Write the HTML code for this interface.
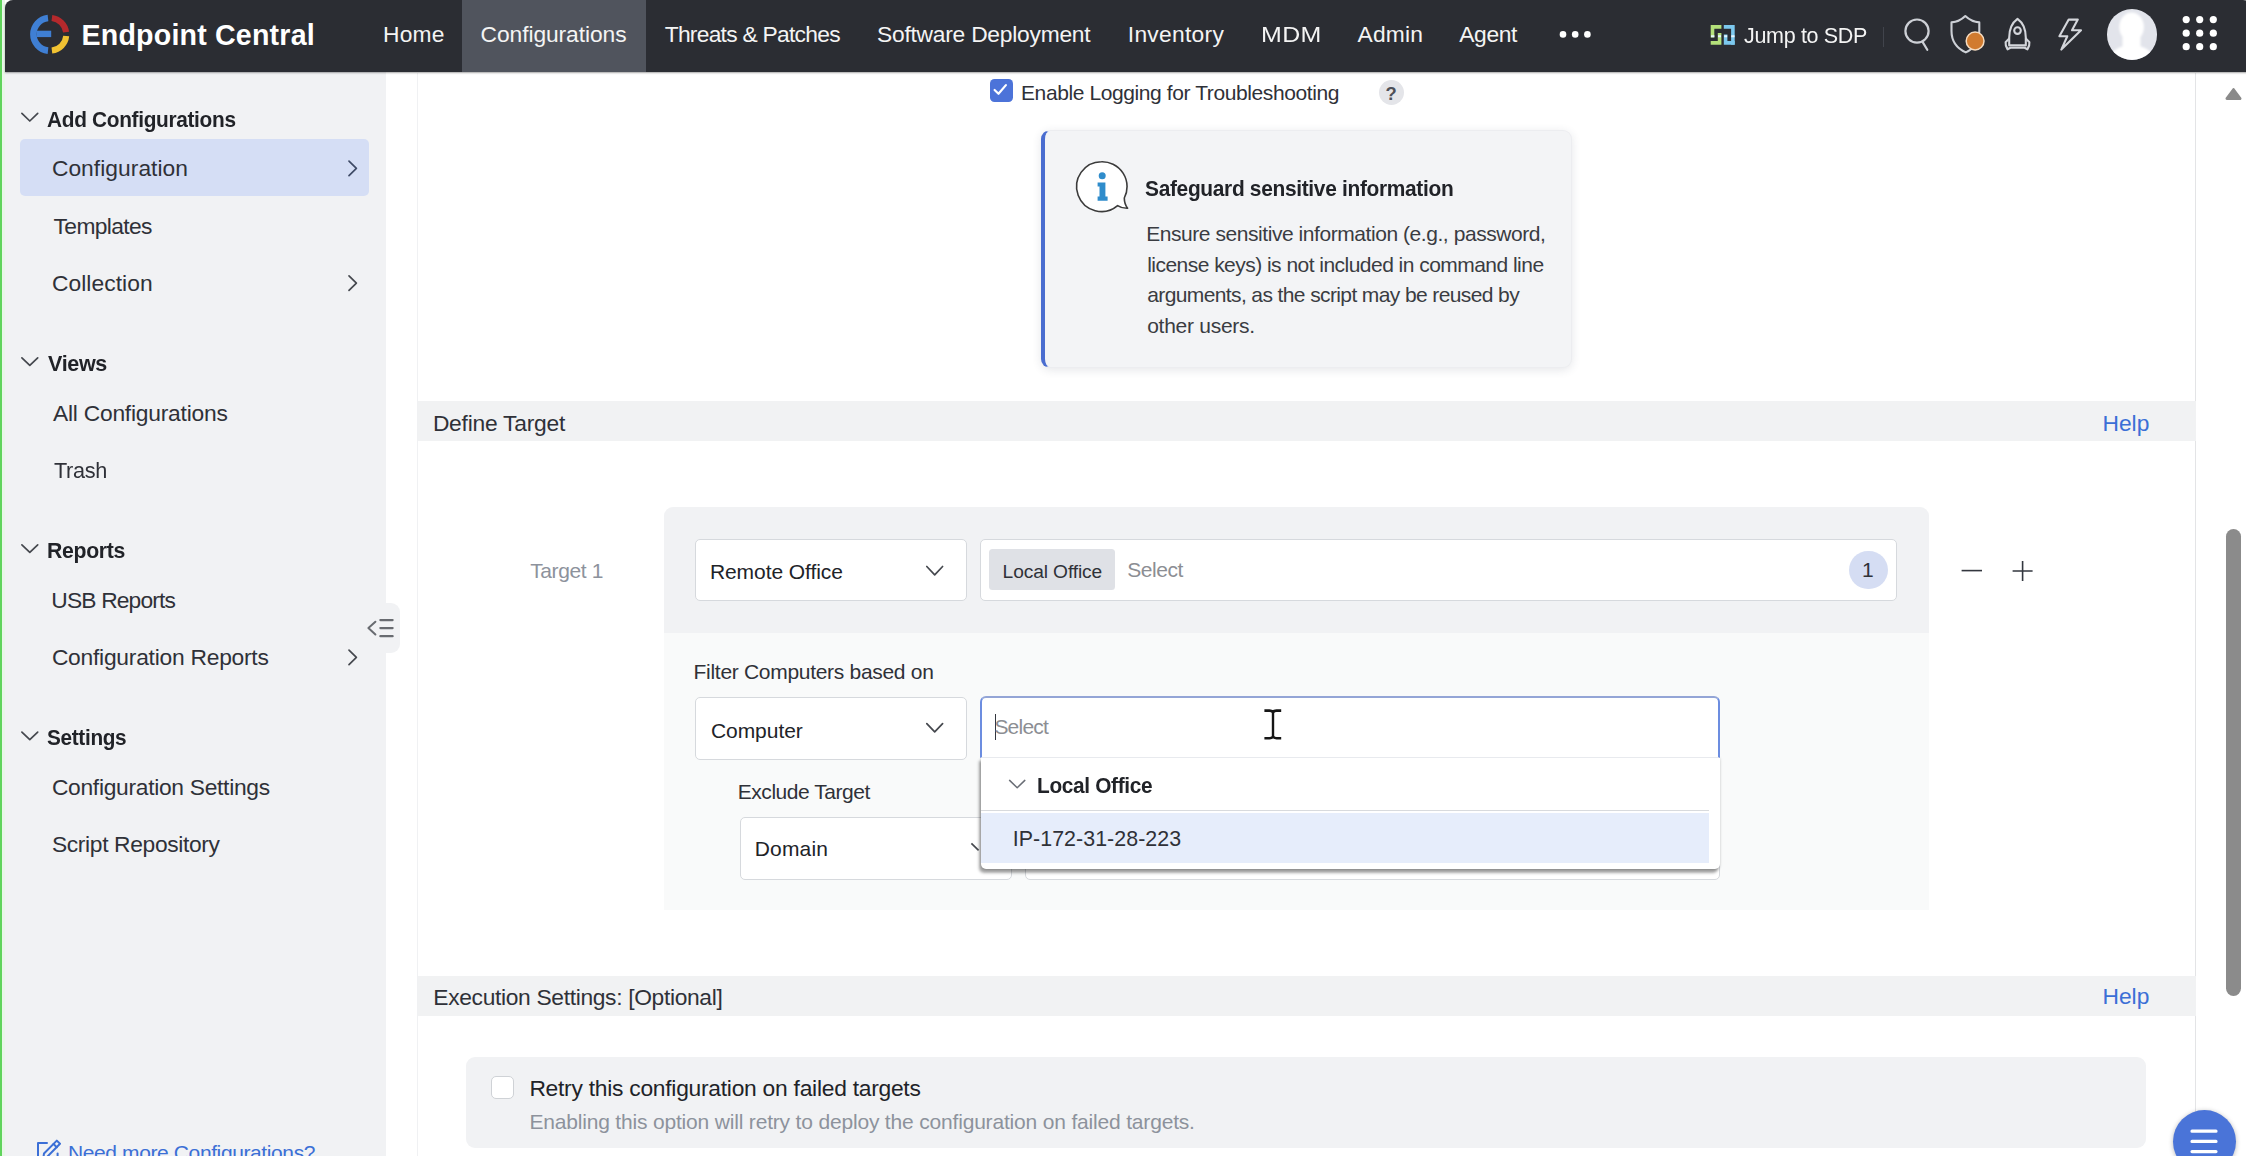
<!DOCTYPE html>
<html lang="en">
<head>
<meta charset="utf-8">
<title>Endpoint Central - Configurations</title>
<style>
*{box-sizing:border-box;margin:0;padding:0}
html,body{width:2246px;height:1156px;overflow:hidden;background:#fff}
body{position:relative;font-family:"Liberation Sans",sans-serif;color:#2a2e36}
.abs,.t,svg.i{position:absolute}
.t{white-space:pre;line-height:40px;display:block;transform-origin:0 50%}
a.t{text-decoration:none}
#edge{left:0;top:0;width:2.4px;height:1156px;background:#60d45c}
#edge2{left:2.4px;top:0;width:2.6px;height:1156px;background:#e9f7e8}
#nav{left:5px;top:0;width:2247px;height:72px;background:#2b2d33;border-radius:8px 9px 0 0;box-shadow:0 1px 2px rgba(0,0,0,.35)}
#tab{left:462.3px;top:0;width:183.7px;height:72px;background:#50545d}
#side{left:4.5px;top:72px;width:381.2px;height:1084px;background:#f1f2f4}
#selitem{left:20.3px;top:139px;width:348.5px;height:57px;background:#d5def5;border-radius:5px}
#collapse{left:366px;top:602.8px;width:34.4px;height:49.8px;background:#f1f2f4;border-radius:0 9px 9px 0}
#lb{left:417px;top:73px;width:1px;height:1083px;background:#f0f1f3}
#rb{left:2195.2px;top:73px;width:1px;height:1083px;background:#e3e4e6}
.band{left:418px;width:1777.5px;background:#f1f2f3}
#band1{top:401.2px;height:40px}
#band2{top:975.6px;height:40px}
#info{left:1041.2px;top:129.8px;width:531px;height:238.2px;background:#f3f4f6;border-radius:9px;border:1px solid #ecedf0;border-left:4px solid #4a6dd0;box-shadow:0 2px 10px rgba(40,50,70,.12)}
#tbox{left:663.5px;top:507px;width:1265.7px;height:403.2px;background:#f9fafa;border-radius:9px 9px 0 0;overflow:hidden}
#tboxtop{left:0;top:0;width:100%;height:126.2px;background:#f1f2f4}
.inp{background:#fff;border:1px solid #d6d9dd;border-radius:5px}
#chip{left:988.8px;top:549.1px;width:126.6px;height:41.2px;background:#dfe1e6;border-radius:3.5px}
#badge{left:1849.3px;top:550.7px;width:38.4px;height:38.4px;border-radius:50%;background:#d5ddf3}
#ddin{left:980.2px;top:696px;width:739.6px;height:61.6px;background:#fff;border:2px solid #6c8de0;border-top-color:#94a5d6;border-bottom:1px solid #e8eaee;border-radius:6px 6px 0 0}
#dd{left:981.2px;top:757px;width:738.4px;height:112.2px;background:#fff;border-radius:0 0 5px 5px;box-shadow:-2px 4px 3px rgba(0,0,0,.34),0 1px 3px rgba(0,0,0,.2)}
#ddline{left:981.2px;top:810px;width:727.5px;height:1.2px;background:#d8dadd}
#ddopt{left:981.2px;top:812.8px;width:727.5px;height:50px;background:#e6edfb}
#retry{left:466.1px;top:1057.4px;width:1680.2px;height:91px;background:#f1f2f4;border-radius:9px}
#cb1{left:989.7px;top:78.8px;width:23.6px;height:23.4px;background:#4c73d9;border-radius:4.5px}
#cb2{left:490.6px;top:1076.2px;width:23px;height:23.3px;background:#fff;border:1px solid #cfd2d6;border-radius:5px}
#qm{left:1378.8px;top:80.2px;width:25.2px;height:25.2px;border-radius:50%;background:#e4e5e9}
#thumb{left:2226px;top:528.6px;width:14.5px;height:467.6px;border-radius:7.5px;background:#8b8b8b}
#fab{left:2173.1px;top:1110.1px;width:63px;height:63px;border-radius:50%;background:#4a74d8;box-shadow:0 1px 5px rgba(0,0,0,.28)}
#avatar{left:2106.8px;top:9.1px;width:50.6px;height:50.6px;border-radius:50%;background:#e2e4eb;overflow:hidden}
#caret{left:994.6px;top:714px;width:1.4px;height:26px;background:#33373f}
#navsep{left:1882.6px;top:27px;width:1px;height:20px;background:#41444c}
</style>
</head>
<body>
<div id="edge" class="abs"></div><div id="edge2" class="abs"></div>

<aside id="side" class="abs"></aside>
<div id="selitem" class="abs"></div>
<div id="collapse" class="abs"></div>

<main>
<div id="lb" class="abs"></div><div id="rb" class="abs"></div>
<div id="band1" class="abs band"></div>
<div id="band2" class="abs band"></div>
<div id="info" class="abs"></div>
<div id="tbox" class="abs"><div id="tboxtop" class="abs"></div></div>
<div class="abs inp" style="left:695.4px;top:538.5px;width:271.8px;height:62px"></div>
<div class="abs inp" style="left:980.3px;top:538.5px;width:916.6px;height:62px"></div>
<div id="chip" class="abs"></div>
<div id="badge" class="abs"></div>
<div class="abs inp" style="left:695.4px;top:697.4px;width:271.8px;height:62.4px"></div>
<div class="abs inp" style="left:740.2px;top:817.4px;width:271.6px;height:62.4px"></div>
<div class="abs inp" style="left:1025.2px;top:817.4px;width:694.4px;height:62.4px"></div>
<div id="dd" class="abs"></div>
<div id="ddin" class="abs"></div>
<div id="ddline" class="abs"></div>
<div id="ddopt" class="abs"></div>
<div id="caret" class="abs"></div>
<div id="retry" class="abs"></div>
<div id="cb1" class="abs"></div>
<div id="cb2" class="abs"></div>
<div id="qm" class="abs"></div>
<div id="thumb" class="abs"></div>
<div id="fab" class="abs"></div>
</main>

<nav id="nav" class="abs"></nav>
<div id="tab" class="abs"></div>
<div id="navsep" class="abs"></div>
<div id="avatar" class="abs"></div>

<svg class="i" style="left:0;top:0;pointer-events:none" width="2246" height="1156" viewBox="0 0 2246 1156" fill="none" stroke-linecap="round" stroke-linejoin="round">
<!-- logo -->
<g stroke-width="6.6" stroke-linecap="butt">
<path d="M48.0,50.6 A16.4,16.4 0 0 1 48.0,18.0" stroke="#3f7fd4"/>
<path d="M51.9,18.0 A16.4,16.4 0 0 1 66.1,32.2" stroke="#b5292c" stroke-width="6"/>
<path d="M66.2,36.0 A16.4,16.4 0 0 1 51.9,50.6" stroke="#f1c232" stroke-width="6"/>
<path d="M36.6,33.9 H51.2" stroke="#3f7fd4" stroke-width="6.4"/>
</g>
<!-- sdp icon -->
<g stroke-width="3.6" stroke-linecap="butt" stroke-linejoin="miter">
<path d="M1721.4,26.9 H1712.5 V37.6" stroke="#b4e07a"/>
<path d="M1710.7,42.9 H1719.6 V33" stroke="#b4e07a"/>
<path d="M1723.8,26.9 H1732.9 V44.7" stroke="#7cc8ee"/>
<path d="M1734.7,42.9 H1725.6 V34.5" stroke="#7cc8ee"/>
<path d="M1711,36.3 H1714.4 M1718,36.3 H1721 M1724.2,36.3 H1727.2 M1731.2,36.3 H1734.6" stroke="#e6f6ff" stroke-width="2"/>
</g>
<!-- search -->
<g stroke="#cdd0d6" stroke-width="2.2">
<circle cx="1917" cy="31.1" r="11.6"/>
<path d="M1922.4,41.6 L1927.3,49.8"/>
</g>
<!-- shield -->
<path d="M1965.3,16 C1961,20.2 1956.2,22.1 1951.5,22.4 V31 C1951.5,41.5 1956.8,48.3 1965.8,52.4 C1974.6,48.3 1979.3,41.5 1979.3,31 V22.4 C1974.6,22.1 1969.8,20.2 1965.3,16 Z" stroke="#cdd0d6" stroke-width="2.1"/>
<circle cx="1975.1" cy="41" r="8.9" fill="#d17b2f" stroke="#f6dcc0" stroke-width="1.5"/>
<!-- rocket -->
<g stroke="#d4d6db" stroke-width="2.1">
<path d="M2017.5,18.8 C2012.2,22.6 2009.2,29.5 2009.2,37.5 V45.4 H2025.8 V37.5 C2025.8,29.5 2022.8,22.6 2017.5,18.8 Z"/>
<circle cx="2017.5" cy="30.6" r="3.3"/>
<path d="M2009,38.6 L2005.6,42.2 C2005.3,44.5 2006,47 2007.6,49.3 L2010.4,47.8 H2024.6 L2027.4,49.3 C2029,47 2029.7,44.5 2029.4,42.2 L2026,38.6"/>
</g>
<!-- lightning -->
<path d="M2068.7,19.6 H2077.8 L2072,30.3 H2081 L2061.3,49.6 L2067.3,36.2 H2059.4 Z" stroke="#d4d6db" stroke-width="2.1"/>
<!-- grid dots -->
<g fill="#ffffff">
<circle cx="2186.2" cy="19.6" r="3.6"/><circle cx="2199.7" cy="19.6" r="3.6"/><circle cx="2213.3" cy="19.6" r="3.6"/>
<circle cx="2186.2" cy="33.2" r="3.6"/><circle cx="2199.7" cy="33.2" r="3.6"/><circle cx="2213.3" cy="33.2" r="3.6"/>
<circle cx="2186.2" cy="46.7" r="3.6"/><circle cx="2199.7" cy="46.7" r="3.6"/><circle cx="2213.3" cy="46.7" r="3.6"/>
</g>
<!-- more dots -->
<g fill="#ffffff"><circle cx="1563" cy="34.4" r="3.3"/><circle cx="1575.2" cy="34.4" r="3.3"/><circle cx="1587.4" cy="34.4" r="3.3"/></g>
<!-- avatar figure -->
<clipPath id="avc"><circle cx="2132" cy="34.4" r="25.3"/></clipPath>
<filter id="avb" x="-20%" y="-20%" width="140%" height="140%"><feGaussianBlur stdDeviation="1.3"/></filter>
<g clip-path="url(#avc)"><g fill="#ffffff" filter="url(#avb)"><ellipse cx="2131.6" cy="27" rx="12.3" ry="14.5"/><rect x="2122.5" y="34" width="18" height="16" rx="4"/><ellipse cx="2131.6" cy="61" rx="23" ry="16"/></g></g>
<!-- sidebar chevrons -->
<g stroke="#45484e" stroke-width="1.7">
<path d="M21.9,113.4 L29.8,121 L37.7,113.4"/>
<path d="M21.9,357.8 L29.8,365.4 L37.7,357.8"/>
<path d="M21.9,544.8 L29.8,552.4 L37.7,544.8"/>
<path d="M21.9,732.1 L29.8,739.7 L37.7,732.1"/>
<path d="M349,161.1 L356.4,168.4 L349,175.7" stroke="#3e4a66"/>
<path d="M349,275.8 L356.4,283.1 L349,290.4"/>
<path d="M349,650.1 L356.4,657.4 L349,664.7"/>
</g>
<!-- collapse icon -->
<g stroke="#686b70" stroke-width="2.3">
<path d="M375.4,621.7 L368.4,628 L375.4,634.5" stroke-width="2"/>
<path d="M380.4,620.1 H392.6 M380.4,628.1 H392.6 M380.4,636.2 H392.6"/>
</g>
<!-- pencil icon -->
<g stroke="#3b6fd6" stroke-width="2">
<path d="M47,1143 H38 V1157"/>
<path d="M56.8,1140.6 L60,1143.8 L47,1157 L43.5,1157 L44,1153.5 Z"/>
<path d="M53.5,1144 L56.8,1147.3"/>
<path d="M57.6,1153.5 V1157"/>
</g>
<!-- checkbox tick -->
<path d="M994.6,90 L998.5,93.8 L1005.9,85.1" stroke="#ffffff" stroke-width="2.2"/>
<!-- info icon -->
<path d="M1101.4,161.7 A24.9,24.9 0 1 0 1117.6,205.6 C1120.5,207.5 1124,208.4 1127.6,208.3 C1125.4,205.4 1124.3,201.8 1124.3,198 A24.9,24.9 0 0 0 1101.4,161.7 Z" fill="#ffffff" stroke="#3b3b3b" stroke-width="1.6"/>
<g fill="#2f8ccb"><circle cx="1102.2" cy="175.8" r="3.5"/><path d="M1097.6,182.4 H1105.4 V196.6 H1107.6 V200.7 H1097.6 V196.6 H1099.5 V186.5 H1097.6 Z"/></g>
<!-- select chevrons -->
<g stroke="#45484e" stroke-width="1.7">
<path d="M926.8,566.5 L934.7,574.8 L942.6,566.5"/>
<path d="M926.8,723.6 L934.7,731.9 L942.6,723.6"/>
</g>
<path d="M971.4,843.3 L978.6,850.4" stroke-linecap="butt" stroke="#45484e" stroke-width="1.7"/>
<path d="M1009.6,780.4 L1017.2,787.8 L1024.8,780.4" stroke="#6a6e76" stroke-width="1.5"/>
<!-- minus / plus -->
<g stroke="#33373f" stroke-width="1.6" stroke-linecap="butt">
<path d="M1961.6,570.6 H1982"/>
<path d="M2012.6,571 H2032.6 M2022.6,561 V581"/>
</g>
<!-- I-beam mouse cursor -->
<g stroke="#161616" stroke-width="2.4" stroke-linecap="butt">
<path d="M1273,712 V737"/>
<path d="M1264.4,710.6 H1269.5 C1271.5,710.6 1272.5,711.3 1273,712.3 C1273.5,711.3 1274.5,710.6 1276.5,710.6 H1281.2" stroke-width="2.6"/>
<path d="M1264.4,738.2 H1269.5 C1271.5,738.2 1272.5,737.5 1273,736.5 C1273.5,737.5 1274.5,738.2 1276.5,738.2 H1281.2" stroke-width="2.6"/>
</g>
<!-- scrollbar arrow -->
<path d="M2233.5,89.4 L2240.2,98.6 H2226.8 Z" fill="#8a8a8a" stroke="#8a8a8a" stroke-width="2.6"/>
<!-- fab lines -->
<g stroke="#ffffff" stroke-width="3.2">
<path d="M2192,1131.2 H2216 M2192,1141.4 H2216 M2192,1151.6 H2216"/>
</g>
</svg>

<span class="t" style="left:81.5px;top:15px;font-size:28.6px;letter-spacing:0.19px;color:#ffffff;font-weight:700">Endpoint Central</span>
<span class="t" style="left:383.0px;top:14px;font-size:22.8px;letter-spacing:0.20px;color:#f4f4f4">Home</span>
<span class="t" style="left:480.6px;top:14px;font-size:22.8px;letter-spacing:-0.08px;color:#f4f4f4">Configurations</span>
<span class="t" style="left:664.7px;top:14px;font-size:22.8px;letter-spacing:-0.73px;color:#f4f4f4">Threats &amp; Patches</span>
<span class="t" style="left:877.0px;top:14px;font-size:22.8px;letter-spacing:-0.24px;color:#f4f4f4">Software Deployment</span>
<span class="t" style="left:1127.8px;top:14px;font-size:22.8px;letter-spacing:0.28px;color:#f4f4f4">Inventory</span>
<span class="t" style="left:1260.5px;top:14px;font-size:22.8px;letter-spacing:0.35px;transform:scaleX(1.0948);color:#f4f4f4">MDM</span>
<span class="t" style="left:1357.5px;top:14px;font-size:22.8px;letter-spacing:0.18px;color:#f4f4f4">Admin</span>
<span class="t" style="left:1459.3px;top:14px;font-size:22.8px;letter-spacing:-0.40px;color:#f4f4f4">Agent</span>
<span class="t" style="left:1743.6px;top:15px;font-size:22.8px;letter-spacing:-0.35px;transform:scaleX(0.9436);color:#f4f4f4">Jump to SDP</span>
<span class="t" style="left:47.4px;top:99px;font-size:22.8px;letter-spacing:-0.35px;transform:scaleX(0.9139);color:#212328;font-weight:700">Add Configurations</span>
<span class="t" style="left:51.9px;top:148px;font-size:22.8px;letter-spacing:0.04px;color:#2f3138">Configuration</span>
<span class="t" style="left:53.6px;top:206px;font-size:22.8px;letter-spacing:-0.64px;color:#2f3138">Templates</span>
<span class="t" style="left:51.9px;top:263px;font-size:22.8px;letter-spacing:0.07px;color:#2f3138">Collection</span>
<span class="t" style="left:48.3px;top:343px;font-size:22.8px;letter-spacing:-0.35px;transform:scaleX(0.9448);color:#212328;font-weight:700">Views</span>
<span class="t" style="left:52.9px;top:393px;font-size:22.8px;letter-spacing:-0.22px;color:#2f3138">All Configurations</span>
<span class="t" style="left:53.6px;top:450px;font-size:22.8px;letter-spacing:-0.35px;transform:scaleX(0.9505);color:#2f3138">Trash</span>
<span class="t" style="left:47.4px;top:530px;font-size:22.8px;letter-spacing:-0.35px;transform:scaleX(0.9316);color:#212328;font-weight:700">Reports</span>
<span class="t" style="left:51.3px;top:580px;font-size:22.8px;letter-spacing:-0.84px;color:#2f3138">USB Reports</span>
<span class="t" style="left:51.9px;top:637px;font-size:22.8px;letter-spacing:-0.24px;color:#2f3138">Configuration Reports</span>
<span class="t" style="left:47.4px;top:717px;font-size:22.8px;letter-spacing:-0.35px;transform:scaleX(0.9106);color:#212328;font-weight:700">Settings</span>
<span class="t" style="left:51.9px;top:767px;font-size:22.8px;letter-spacing:-0.29px;color:#2f3138">Configuration Settings</span>
<span class="t" style="left:51.9px;top:824px;font-size:22.8px;letter-spacing:-0.34px;color:#2f3138">Script Repository</span>
<a class="t" style="left:68.0px;top:1133px;font-size:21.0px;letter-spacing:-0.39px;color:#3b6fd6">Need more Configurations?</a>
<span class="t" style="left:1021.0px;top:73px;font-size:21.0px;letter-spacing:-0.40px;color:#2f3138">Enable Logging for Troubleshooting</span>
<span class="t" style="left:1144.9px;top:168px;font-size:22.8px;letter-spacing:-0.35px;transform:scaleX(0.9172);color:#212328;font-weight:700">Safeguard sensitive information</span>
<span class="t" style="left:1146.2px;top:214px;font-size:21.0px;letter-spacing:-0.44px;color:#3a3c42">Ensure sensitive information (e.g., password,</span>
<span class="t" style="left:1147.2px;top:245px;font-size:21.0px;letter-spacing:-0.53px;color:#3a3c42">license keys) is not included in command line</span>
<span class="t" style="left:1147.2px;top:275px;font-size:21.0px;letter-spacing:-0.61px;color:#3a3c42">arguments, as the script may be reused by</span>
<span class="t" style="left:1147.2px;top:306px;font-size:21.0px;letter-spacing:-0.27px;color:#3a3c42">other users.</span>
<span class="t" style="left:432.9px;top:403px;font-size:22.8px;letter-spacing:-0.23px;color:#2f3138">Define Target</span>
<a class="t" style="left:2102.4px;top:403px;font-size:22.8px;letter-spacing:0.03px;color:#3b6fd6">Help</a>
<span class="t" style="left:530.2px;top:551px;font-size:21.0px;letter-spacing:-0.39px;color:#8d929c">Target 1</span>
<span class="t" style="left:709.9px;top:552px;font-size:21.0px;letter-spacing:-0.07px;color:#212328">Remote Office</span>
<span class="t" style="left:1002.6px;top:552px;font-size:19.2px;letter-spacing:-0.12px;color:#2f3138">Local Office</span>
<span class="t" style="left:1127.2px;top:550px;font-size:21.0px;letter-spacing:-0.46px;color:#8c8e93">Select</span>
<span class="t" style="left:693.6px;top:652px;font-size:21.0px;letter-spacing:-0.30px;color:#2f3138">Filter Computers based on</span>
<span class="t" style="left:710.9px;top:711px;font-size:21.0px;letter-spacing:-0.04px;color:#212328">Computer</span>
<span class="t" style="left:994.4px;top:707px;font-size:21.0px;letter-spacing:-0.78px;color:#8c8e93">Select</span>
<span class="t" style="left:737.8px;top:772px;font-size:21.0px;letter-spacing:-0.47px;color:#2f3138">Exclude Target</span>
<span class="t" style="left:754.7px;top:829px;font-size:21.0px;letter-spacing:0.18px;color:#212328">Domain</span>
<span class="t" style="left:1037.3px;top:765px;font-size:22.8px;letter-spacing:-0.35px;transform:scaleX(0.9133);color:#212328;font-weight:700">Local Office</span>
<span class="t" style="left:1012.8px;top:819px;font-size:21.4px;letter-spacing:0.04px;color:#2f3138">IP-172-31-28-223</span>
<span class="t" style="left:433.3px;top:977px;font-size:22.8px;letter-spacing:-0.33px;color:#2f3138">Execution Settings: [Optional]</span>
<a class="t" style="left:2102.4px;top:976px;font-size:22.8px;letter-spacing:0.03px;color:#3b6fd6">Help</a>
<span class="t" style="left:529.4px;top:1068px;font-size:22.8px;letter-spacing:-0.25px;color:#212328">Retry this configuration on failed targets</span>
<span class="t" style="left:529.4px;top:1102px;font-size:21.0px;letter-spacing:-0.18px;color:#8d929c">Enabling this option will retry to deploy the configuration on failed targets.</span>
<span class="t" style="left:1862.0px;top:550px;font-size:21.0px;letter-spacing:0.00px;color:#2f3138">1</span>
<span class="t" style="left:1385.6px;top:74px;font-size:18.4px;letter-spacing:0.00px;color:#4d5058;font-weight:700">?</span>
</body>
</html>
